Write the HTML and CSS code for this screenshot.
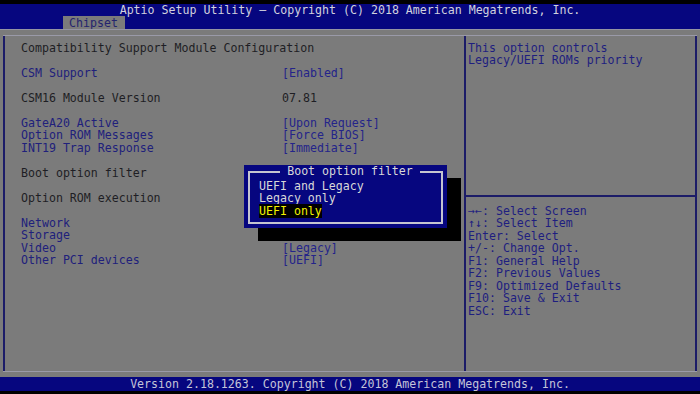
FILE: index.html
```html
<!DOCTYPE html>
<html lang="en">
<head>
    <meta charset="UTF-8">
    <meta name="viewport" content="width=device-width, initial-scale=1.0">
    <title>Aptio Setup Utility</title>
    <link rel="stylesheet" href="styles.css">
</head>
<body>
    <div class="screen">
        <div class="header">
            <div class="title">Aptio Setup Utility &ndash; Copyright (C) 2018 American Megatrends, Inc.</div>
            <div class="tabs">
                <span class="tab">Chipset</span>
            </div>
        </div>

        <div class="main">
            <div class="frame">
                <div class="settings">
                    <div class="row label">Compatibility Support Module Configuration</div>
                    <div class="row"></div>
                    <div class="row item"><span>CSM Support</span><span class="value">[Enabled]</span></div>
                    <div class="row"></div>
                    <div class="row label"><span>CSM16 Module Version</span><span>07.81</span></div>
                    <div class="row"></div>
                    <div class="row item"><span>GateA20 Active</span><span class="value">[Upon Request]</span></div>
                    <div class="row item"><span>Option ROM Messages</span><span class="value">[Force BIOS]</span></div>
                    <div class="row item"><span>INT19 Trap Response</span><span class="value">[Immediate]</span></div>
                    <div class="row"></div>
                    <!-- value hidden under the popup -->
                    <div class="row active"><span>Boot option filter</span><span class="value"></span></div>
                    <div class="row"></div>
                    <div class="row label">Option ROM execution</div>
                    <div class="row"></div>
                    <div class="row item"><span>Network</span><span class="value"></span></div>
                    <div class="row item"><span>Storage</span><span class="value"></span></div>
                    <div class="row item"><span>Video</span><span class="value">[Legacy]</span></div>
                    <div class="row item"><span>Other PCI devices</span><span class="value">[UEFI]</span></div>

                    <!-- popup for the selected option -->
                    <div class="popup">
                        <fieldset class="popup-box">
                            <legend>Boot option filter</legend>
                            <div class="row">UEFI and Legacy</div>
                            <div class="row">Legacy only</div>
                            <div class="row"><span class="picked">UEFI only</span></div>
                        </fieldset>
                    </div>
                </div>

                <div class="side">
                    <div class="help">
                        <div class="row">This option controls</div>
                        <div class="row">Legacy/UEFI ROMs priority</div>
                    </div>
                    <div class="keys">
                        <div class="row">&rarr;&larr;: Select Screen</div>
                        <div class="row">&uarr;&darr;: Select Item</div>
                        <div class="row">Enter: Select</div>
                        <div class="row">+/-: Change Opt.</div>
                        <div class="row">F1: General Help</div>
                        <div class="row">F2: Previous Values</div>
                        <div class="row">F9: Optimized Defaults</div>
                        <div class="row">F10: Save &amp; Exit</div>
                        <div class="row">ESC: Exit</div>
                    </div>
                </div>
            </div>
        </div>

        <div class="footer">Version 2.18.1263. Copyright (C) 2018 American Megatrends, Inc.</div>
    </div>
</body>
</html>
```

FILE: styles.css
```css
body {
    margin: 0;
    background-color: #000;
    font-family: "DejaVu Sans Mono", monospace;
    font-size: 11.6px;
    line-height: 12.47px;
    overflow: hidden;
}
.screen {
    height: 394px;
    padding-top: 4px;
    box-sizing: border-box;
    display: flex;
    flex-direction: column;
}
.header {
    background-color: #06067f;
    height: 25px;
}
.title {
    text-align: center;
    color: #d2d2de;
    height: 12px;
    line-height: 13px;
}
.tabs {
    padding-left: 63px;
}
.tab {
    display: inline-block;
    height: 13px;
    line-height: 14px;
    padding: 0 7px 0 6px;
    background-color: #7b7b7b;
    color: #24246e;
}
.main {
    background-color: #7b7b7b;
    height: 348px;
    padding: 5px 3px 5px;
    border-top: 1px solid #9494a2;
    box-sizing: border-box;
    display: flex;
}
.frame {
    flex: 1;
    display: flex;
    border-top: 1px solid #9a9aa8;
    border-bottom: 1px solid #9a9aa8;
}
.row {
    height: 12.47px;
    white-space: pre;
}
.settings {
    position: relative;
    width: 461px;
    box-sizing: border-box;
    border-left: 2px solid #1c1c68;
    padding: 6px 0 0 16px;
}
.settings .row {
    display: grid;
    grid-template-columns: 261px auto;
}
.label {
    color: #1e1e24;
}
.item {
    color: #20207c;
}
.active {
    color: #1e1e24;
}
.value {
    color: #24248a;
}
.side {
    flex: 1;
    display: flex;
    flex-direction: column;
    border-left: 2px solid #1c1c68;
    border-right: 2px solid #1c1c68;
    color: #1e1e80;
}
.help {
    height: 161px;
    padding: 6px 0 0 2px;
    box-sizing: border-box;
    border-bottom: 2px solid #1c1c68;
}
.keys {
    padding: 8px 0 0 2px;
}
.popup {
    position: absolute;
    left: 239px;
    top: 129px;
    width: 203px;
    box-sizing: border-box;
    padding: 0 4px 4px;
    background-color: #06067f;
    box-shadow: 14px 13px 0 #000;
    color: #d8d8d8;
}
.popup-box {
    margin: 0;
    padding: 1.5px 0 4px 9px;
    border: 2px solid #c4c4d0;
    min-width: 0;
}
.popup-box legend {
    margin: 0 auto;
    padding: 0 7px;
    color: #d8d8d8;
    line-height: 13px;
}
.popup-box .row {
    display: block;
    height: 12.8px;
}
.picked {
    background-color: #000;
    color: #f2f200;
}
.footer {
    background-color: #06067f;
    color: #c4c4d8;
    text-align: center;
    height: 14px;
    line-height: 14px;
}
```
